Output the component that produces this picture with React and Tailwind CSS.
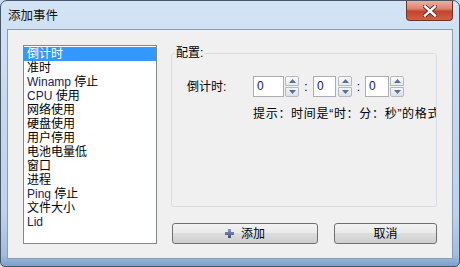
import React from "react";

const items = [
  { t: "倒计时", sel: true },
  { t: "准时" },
  { t: "Winamp 停止", l: "Winamp", r: " 停止" },
  { t: "CPU 使用", l: "CPU", r: " 使用" },
  { t: "网络使用" },
  { t: "硬盘使用" },
  { t: "用户停用" },
  { t: "电池电量低" },
  { t: "窗口" },
  { t: "进程" },
  { t: "Ping 停止", l: "Ping", r: " 停止" },
  { t: "文件大小" },
  { t: "Lid", l: "Lid", r: "" },
];

function Spin() {
  return (
    <div className="w-[14px] h-[21px] flex flex-col">
      <div className="h-[10px] border border-[#b4bac4] rounded-t-[2px] bg-[linear-gradient(180deg,#fbfbfb,#e6e8ec)] flex items-center justify-center">
        <svg width="7" height="4" viewBox="0 0 7 4">
          <path d="M0 4 L3.5 0 L7 4 Z" fill="#5a6f96" />
        </svg>
      </div>
      <div className="h-[10px] mt-[1px] border border-[#b4bac4] rounded-b-[2px] bg-[linear-gradient(180deg,#f4f5f7,#dde0e5)] flex items-center justify-center">
        <svg width="7" height="4" viewBox="0 0 7 4">
          <path d="M0 0 L7 0 L3.5 4 Z" fill="#5a6f96" />
        </svg>
      </div>
    </div>
  );
}

function Edit({ w }) {
  return (
    <div
      className={`${w} h-[21px] border border-[#abadb3] bg-white pl-[3px] text-[12px] leading-[19px] text-[#14145a]`}
    >
      0
    </div>
  );
}

export default function App() {
  return (
    <div className="w-[460px] h-[267px] overflow-hidden bg-[#c8dbef] font-['Liberation_Sans','Noto_Sans_CJK_SC',sans-serif]">
      <div className="w-[460px] h-[267px] flex flex-col rounded-t-[7px] rounded-b-[5px] border border-[#4a5566] bg-[linear-gradient(180deg,#d4e4f6_0%,#c6daf0_35%,#bdd3ec_80%,#9fbde0_96%,#7e9fc8_100%)]">
        {/* title bar */}
        <div className="h-[28px] flex items-start justify-between">
          <div className="pl-[7px] pt-[8px] text-[12.5px] leading-[14px] text-[#111]">
            添加事件
          </div>
          <div className="mr-[6px] w-[47px] h-[20px] rounded-b-[4px] border border-t-0 border-[#6e3328] bg-[linear-gradient(180deg,#eab1a3_0%,#dc8470_40%,#c4432c_55%,#d2603f_100%)] flex items-center justify-center">
            <svg width="14" height="12" viewBox="0 0 14 12">
              <path d="M2 1.5 L12 10.5 M12 1.5 L2 10.5" stroke="#5a2a22" strokeWidth="4.2" strokeLinecap="square" />
              <path d="M2 1.5 L12 10.5 M12 1.5 L2 10.5" stroke="#ffffff" strokeWidth="2.4" strokeLinecap="square" />
            </svg>
          </div>
        </div>

        {/* client area */}
        <div className="mx-[6px] h-[230px] border border-[#8a9db5] bg-[#f0f0f0] flex pl-[15px] pt-[15px] text-[12px] text-black">
          {/* list box */}
          <div className="w-[134px] h-[199px] border border-[#828790] bg-white px-0 pt-[1px]">
            {items.map((it, i) => (
              <div
                key={i}
                className={`h-[14px] leading-[14px] pl-[3px] whitespace-nowrap ${
                  it.sel ? "bg-[#3399ff] text-white" : "text-black"
                }`}
              >
                {it.l !== undefined ? (
                  <>
                    <span className="text-[#1c1c58]">{it.l}</span>
                    {it.r}
                  </>
                ) : (
                  it.t
                )}
              </div>
            ))}
          </div>

          {/* right column */}
          <div className="ml-[14px] w-[266px] min-w-0 flex flex-col">
            <fieldset className="mt-[1px] w-[266px] min-w-0 h-[161px] border border-[#d5dfe5] rounded-[3px]">
              <legend className="ml-[3px] px-[1px] text-[12px] leading-[14px]">配置:</legend>
              <div className="mt-[16px] pl-[15px] flex items-center h-[21px]">
                <div className="w-[66px] leading-[14px]">倒计时:</div>
                <Edit w="w-[31px]" />
                <div className="ml-[1px]">
                  <Spin />
                </div>
                <div className="w-[14px] text-center leading-[14px]">:</div>
                <Edit w="w-[23px]" />
                <div className="ml-[2px]">
                  <Spin />
                </div>
                <div className="w-[13px] text-center leading-[14px]">:</div>
                <Edit w="w-[24px]" />
                <div className="ml-[1px]">
                  <Spin />
                </div>
              </div>
              <div className="mt-[10px] pl-[81px] min-w-0 overflow-hidden whitespace-nowrap leading-[14px] tracking-[0.7px]">
                提示：时间是“时：分：秒”的格式。
              </div>
            </fieldset>

            <div className="mt-[16px] flex gap-[16px] pl-[1px]">
              <div className="w-[146px] h-[21px] rounded-[3px] border border-[#707070] bg-[linear-gradient(180deg,#f2f2f2_0%,#ebebeb_45%,#dddddd_50%,#cfcfcf_100%)] flex items-center justify-center gap-[7px]">
                <svg width="9" height="9" viewBox="0 0 9 9">
                  <defs>
                    <linearGradient id="pg" x1="0" y1="0" x2="0" y2="1">
                      <stop offset="0" stopColor="#8c9cc8" />
                      <stop offset="1" stopColor="#3d4d80" />
                    </linearGradient>
                  </defs>
                  <path d="M3 0 H6 V3 H9 V6 H6 V9 H3 V6 H0 V3 H3 Z" fill="url(#pg)" />
                </svg>
                <span className="leading-[14px]">添加</span>
              </div>
              <div className="w-[103px] h-[21px] rounded-[3px] border border-[#707070] bg-[linear-gradient(180deg,#f2f2f2_0%,#ebebeb_45%,#dddddd_50%,#cfcfcf_100%)] flex items-center justify-center">
                <span className="leading-[14px]">取消</span>
              </div>
            </div>
          </div>
        </div>
      </div>
    </div>
  );
}
